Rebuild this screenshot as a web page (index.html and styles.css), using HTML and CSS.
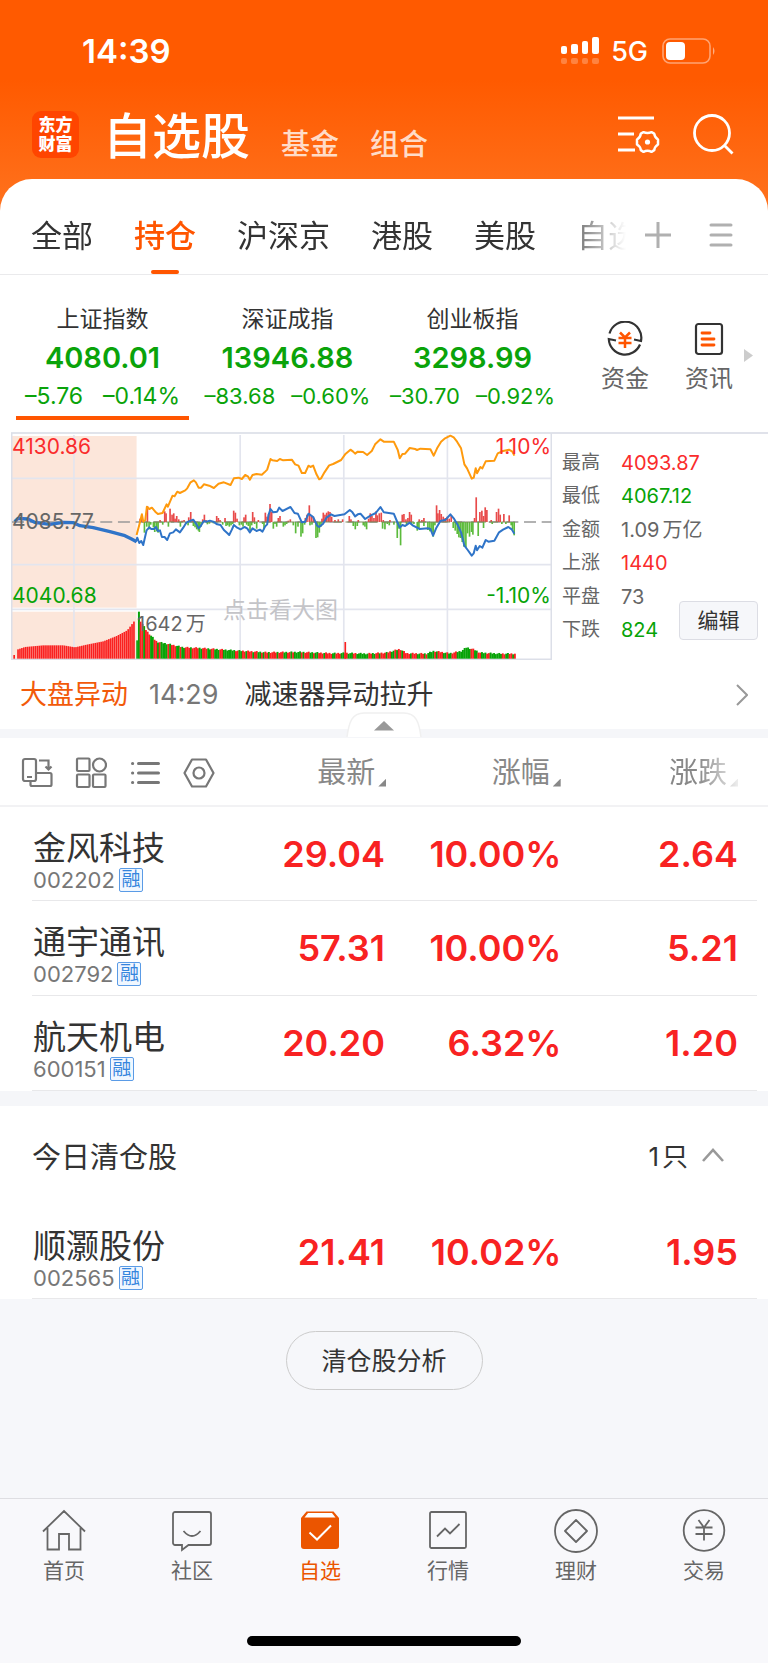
FILE: index.html
```html
<!DOCTYPE html>
<html lang="zh-CN">
<head>
<meta charset="utf-8">
<meta name="viewport" content="width=device-width, initial-scale=1">
<title>自选股</title>
<link rel="stylesheet" href="styles.css">
</head>
<body>
<header class="top">
  <div class="status">
    <span class="clock">14:39</span>
    <div class="status-right">
      <svg class="signal" viewBox="0 0 38 28" fill="#fff">
        <rect x="0" y="9" width="6" height="8" rx="2"/><rect x="10" y="7" width="7" height="10" rx="2"/><rect x="21" y="4" width="6" height="13" rx="2"/><rect x="31" y="0" width="7" height="17" rx="2"/>
        <g opacity=".25"><rect x="0" y="21" width="6" height="6" rx="2"/><rect x="10" y="21" width="7" height="6" rx="2"/><rect x="21" y="21" width="6" height="6" rx="2"/><rect x="31" y="21" width="7" height="6" rx="2"/></g>
      </svg>
      <span class="network">5G</span>
      <svg class="battery" viewBox="0 0 54 26">
        <rect x="1" y="1" width="47" height="24" rx="7" fill="none" stroke="#fff" stroke-opacity=".45" stroke-width="1.6"/>
        <rect x="4" y="4" width="19" height="18" rx="4" fill="#fff"/>
        <path d="M51 9q3 4 0 8z" fill="#fff" fill-opacity=".5"/>
      </svg>
    </div>
  </div>
  <div class="titlebar">
    <div class="logo"><span>东方</span><span>财富</span></div>
    <nav class="sections">
      <h1 class="title">自选股</h1>
      <a class="section" href="#">基金</a>
      <a class="section" href="#">组合</a>
    </nav>
    <button class="icon-btn" aria-label="设置">
      <svg class="settings" viewBox="0 0 42 40" fill="none" stroke="#fff" stroke-width="2.8">
        <path d="M0 3h36M0 19h16M0 35h17"/>
        <path stroke-linejoin="round" stroke-width="2.5" d="M25.5 17.2Q29.500 19 33.500 17.200L36.200 18.600Q36.800 22.500 40 24.500V29.500Q36.800 31.500 36.200 35.200L33.500 36.800Q29.500 34.800 25.500 36.800L22.800 35.200Q22.400 31.500 19 29.500V24.500Q22.400 22.500 22.800 18.600Z"/>
        <circle cx="29.500" cy="27" r="2.600" fill="#fff" stroke="none"/>
      </svg>
    </button>
    <button class="icon-btn" aria-label="搜索">
      <svg class="search" viewBox="0 0 41 41" fill="none" stroke="#fff" stroke-width="2.8"><circle cx="19" cy="19" r="17.500"/><path d="M31 31l8.500 8.500"/></svg>
    </button>
  </div>
</header>

<main class="sheet">
  <div class="groups">
    <nav class="group-tabs">
      <a class="group" href="#">全部</a>
      <a class="group active" href="#">持仓</a>
      <a class="group" href="#">沪深京</a>
      <a class="group" href="#">港股</a>
      <a class="group" href="#">美股</a>
      <a class="group" href="#">自选</a>
    </nav>
    <button class="icon-btn" aria-label="添加"><svg class="plus" viewBox="0 0 26 26" stroke="#b0b0b0" stroke-width="3"><path d="M0 13h26M13 0v26"/></svg></button>
    <button class="icon-btn" aria-label="菜单"><svg class="burger" viewBox="0 0 24 26" stroke="#b0b0b0" stroke-width="3" stroke-linecap="round"><path d="M2 3h20M2 13h20M2 23h20"/></svg></button>
  </div>

  <section class="indices">
    <div class="index-list">
      <a class="index active" href="#"><span class="index-name">上证指数</span><strong class="index-value">4080.01</strong><span class="index-change"><span>–5.76</span><span>–0.14%</span></span></a>
      <a class="index" href="#"><span class="index-name">深证成指</span><strong class="index-value">13946.88</strong><span class="index-change"><span>–83.68</span><span>–0.60%</span></span></a>
      <a class="index" href="#"><span class="index-name">创业板指</span><strong class="index-value">3298.99</strong><span class="index-change"><span>–30.70</span><span>–0.92%</span></span></a>
    </div>
    <div class="shortcuts">
      <a class="shortcut" href="#">
        <svg viewBox="0 0 36 36" fill="none" stroke="#333" stroke-width="2.2"><path d="M2.500 12.500A16.200 16.200 0 0 1 34 20L27 18.500M33 23.500A16.200 16.200 0 0 1 1.800 18L9 19.500"/><g stroke="#ff5500" stroke-width="2.500"><path d="M13 11.500l5 5 5-5M11.500 17h13M11.500 22h13M18 16v11"/></g></svg>
        <span>资金</span>
      </a>
      <a class="shortcut" href="#">
        <svg viewBox="0 0 36 36" fill="none" stroke="#333" stroke-width="2.2"><rect x="5" y="3" width="26" height="30" rx="2.500"/><path stroke="#ff5500" stroke-width="2.800" stroke-linecap="round" d="M11 12h8M11 18h12M11 24h12"/></svg>
        <span>资讯</span>
      </a>
      <svg class="more" viewBox="0 0 9 13"><path d="M0 0l9 6.500L0 13z" fill="#ccc"/></svg>
    </div>
  </section>

  <section class="market">
    <div class="chart">
      <svg class="plot" id="plot" viewBox="33 21 1624 684" preserveAspectRatio="none"></svg>
      <span class="chart-label high">4130.86</span>
      <span class="chart-label base">4085.77</span>
      <span class="chart-label low">4040.68</span>
      <span class="chart-label up">1.10%</span>
      <span class="chart-label down">-1.10%</span>
      <span class="chart-label volume"><span>1642</span><span>万</span></span>
      <span class="chart-label hint">点击看大图</span>
    </div>
    <div class="stats">
      <dl class="stat-list">
        <dt>最高</dt><dd class="red">4093.87</dd>
        <dt>最低</dt><dd class="green">4067.12</dd>
        <dt>金额</dt><dd class="amount"><span>1.09</span><span>万亿</span></dd>
        <dt>上涨</dt><dd class="red">1440</dd>
        <dt>平盘</dt><dd>73</dd>
        <dt>下跌</dt><dd class="green">824</dd>
      </dl>
      <button class="edit">编辑</button>
    </div>
  </section>

  <a class="news" href="#">
    <span class="news-tag">大盘异动</span>
    <time class="news-time">14:29</time>
    <span class="news-text">减速器异动拉升</span>
    <svg class="news-arrow" viewBox="0 0 12 22" fill="none" stroke="#999" stroke-width="2"><path d="M1 1l10 10L1 21"/></svg>
  </a>
  <div class="divider">
    <button class="collapse" aria-label="收起">
      <svg viewBox="0 0 76 26"><path d="M1 25C3 10 6 1 18 1H58C70 1 73 10 75 25" fill="#fff" stroke="#f0f0f0" stroke-width="1.500"/><path d="M28 18.500l10-9.500 10 9.500z" fill="#999"/></svg>
    </button>
  </div>

  <table class="stocks">
    <thead>
      <tr class="head-row">
        <th class="tools">
          <button class="icon-btn" aria-label="切换"><svg viewBox="0 0 32 32" fill="none" stroke="#777" stroke-width="2.2"><rect x="2" y="2" width="13" height="22" rx="2"/><path d="M6 20h5M18 3.500h9.500V12M24.500 9.500l3 3 3-3M15 16h14a1.500 1.500 0 0 1 1.500 1.500v10A1.500 1.500 0 0 1 29 29H11a1.500 1.500 0 0 1-1.500-1.500V24"/></svg></button>
          <button class="icon-btn" aria-label="宫格"><svg viewBox="0 0 32 32" fill="none" stroke="#777" stroke-width="2.2"><rect x="2" y="1.500" width="12.500" height="12.500" rx="1"/><circle cx="24.500" cy="8" r="6.500"/><rect x="2" y="17.500" width="12.500" height="12.500" rx="1"/><rect x="18" y="17.500" width="12.500" height="12.500" rx="1"/></svg></button>
          <button class="icon-btn" aria-label="列表"><svg viewBox="0 0 32 32" fill="none" stroke="#777" stroke-width="3" stroke-linecap="round"><path d="M9.500 6.500h20M9.500 16h20M9.500 25.500h20M3.500 6.500h.2M3.500 16h.2M3.500 25.500h.2"/></svg></button>
          <button class="icon-btn" aria-label="配置"><svg viewBox="0 0 32 32" fill="none" stroke="#777" stroke-width="2.2" stroke-linejoin="round"><path d="M9 2.500h14L30.500 16 23 29.500H9L1.500 16z"/><circle cx="16" cy="16" r="5.500"/></svg></button>
        </th>
        <th><span class="sort">最新</span></th>
        <th><span class="sort">涨幅</span></th>
        <th><span class="sort fade">涨跌</span></th>
      </tr>
    </thead>
    <tbody>
      <tr class="row"><td class="stock"><span class="name">金风科技</span><span class="code">002202<span class="badge">融</span></span></td><td>29.04</td><td>10.00%</td><td>2.64</td></tr>
      <tr class="row"><td class="stock"><span class="name">通宇通讯</span><span class="code">002792<span class="badge">融</span></span></td><td>57.31</td><td>10.00%</td><td>5.21</td></tr>
      <tr class="row"><td class="stock"><span class="name">航天机电</span><span class="code">600151<span class="badge">融</span></span></td><td>20.20</td><td>6.32%</td><td>1.20</td></tr>
    </tbody>
  </table>

  <section class="cleared">
    <div class="cleared-head">
      <h2>今日清仓股</h2>
      <button class="toggle"><span class="count"><span>1</span><span>只</span></span><svg viewBox="0 0 22 14" fill="none" stroke="#999" stroke-width="2.600"><path d="M1 13L11 2l10 11"/></svg></button>
    </div>
    <table class="stocks">
      <tbody>
        <tr class="row"><td class="stock"><span class="name">顺灏股份</span><span class="code">002565<span class="badge">融</span></span></td><td>21.41</td><td>10.02%</td><td>1.95</td></tr>
      </tbody>
    </table>
  </section>

  <div class="foot"><button class="analyse">清仓股分析</button></div>
</main>

<footer class="dock">
  <nav class="dock-tabs">
    <a class="dock-tab" href="#"><svg viewBox="0 0 44 44"><path d="M1 22.500L22 2l21 20.500M5.500 19v21.500h11.500V25h10v15.500h11.500V19"/></svg>首页</a>
    <a class="dock-tab" href="#"><svg viewBox="0 0 44 44"><path d="M5 3h34a2 2 0 0 1 2 2v29a2 2 0 0 1-2 2H18.500L12 41v-5H5a2 2 0 0 1-2-2V5a2 2 0 0 1 2-2zM13.500 22q8.500 10 17 0"/></svg>社区</a>
    <a class="dock-tab active" href="#"><svg viewBox="0 0 44 44"><path d="M8.500 2.500h27L41 9v28a3 3 0 0 1-3 3H6a3 3 0 0 1-3-3V9z" fill="#eb5500" stroke="none"/><path d="M10 4h24l3.500 4.500h-31z" fill="#fff" stroke="none"/><path d="M11.500 23.500l7.500 7 14-14" stroke="#fff" stroke-width="2"/></svg>自选</a>
    <a class="dock-tab" href="#"><svg viewBox="0 0 44 44"><rect x="4" y="3" width="36" height="36" rx="1.500"/><path d="M11 27.500l8-8 5 5 9.500-9.500"/></svg>行情</a>
    <a class="dock-tab" href="#"><svg viewBox="0 0 44 44"><circle cx="22" cy="22" r="21"/><path d="M22 11l11 11-11 11-11-11z" stroke-linejoin="round"/></svg>理财</a>
    <a class="dock-tab" href="#"><svg viewBox="0 0 44 44"><circle cx="22" cy="21.500" r="20.300"/><path d="M16.500 11l5.500 7.500 5.500-7.500M13.500 18.500h17M13.500 25h17M22 18.500v13"/></svg>交易</a>
  </nav>
  <div class="home-bar"></div>
</footer>
<script src="chart.js"></script>
</body>
</html>
```

FILE: styles.css
```css
* { box-sizing: border-box; }

body {
  margin: 0;
  min-height: 100vh;
  display: flex;
  flex-direction: column;
  font-family: Inter, "Noto Sans CJK SC", sans-serif;
  color: #333;
  background: linear-gradient(#ff5a00 80px, #ff7420 220px, #ff7420);
}

a { color: inherit; text-decoration: none; }
button { margin: 0; padding: 0; border: 0; background: none; font: inherit; color: inherit; }
svg { display: block; flex: none; }
h1, h2, dl, dd { margin: 0; }

.red { color: #fa2c2c; }
.green { color: #07a307; }
.icon-btn { display: flex; flex: none; }

/* Status bar and title */
.status { height: 102px; padding: 0 52px 0 82px; display: flex; align-items: center; justify-content: space-between; color: #fff; }
.clock { font-size: 33px; font-weight: 600; }
.status-right { display: flex; align-items: center; }
.signal { width: 38px; height: 28px; }
.network { margin: 0 14px 0 12px; font-size: 27px; font-weight: 500; line-height: 32px; padding-top: 2px; }
.battery { width: 54px; height: 26px; }

.titlebar { height: 77px; padding: 0 34px 12px 32px; display: flex; align-items: center; }
.logo {
  width: 47px; height: 47px; border-radius: 9px; background: #ff4500; color: #fff;
  display: flex; flex-direction: column; align-items: center; justify-content: center;
  font-size: 17px; line-height: 19px; font-weight: 900;
}
.sections { flex: 1; margin-left: 24px; padding-top: 4px; display: flex; align-items: last baseline; gap: 31px; color: #fff; line-height: 56px; }
.title { font-size: 49px; font-weight: 500; }
.section { padding-top: 3px; font-size: 29px; line-height: 40px; font-weight: 500; color: #ffdcc8; }
.sections { align-items: flex-end; }
.settings { width: 42px; height: 40px; margin-right: 33px; }
.search { width: 41px; height: 41px; }

/* Sheet */
.sheet { flex: 1; display: flex; flex-direction: column; background: #fff; border-radius: 32px 32px 0 0; }

.groups { height: 96px; padding-right: 35px; display: flex; align-items: center; border-bottom: 1px solid #eaeaec; }
.group-tabs {
  flex: 1; min-width: 0; height: 96px; padding: 0 0 2px 31px; overflow: hidden;
  display: flex; align-items: stretch; gap: 41px;
  font-size: 31px; line-height: 113px; white-space: nowrap;
  -webkit-mask-image: linear-gradient(to left, transparent, #000 72px);
  mask-image: linear-gradient(to left, transparent, #000 72px);
}
.group { position: relative; flex: none; }
.group.active { color: #ff5500; font-weight: 500; }
.group.active::after { content: ""; position: absolute; left: 50%; bottom: -1px; width: 28px; height: 4px; margin-left: -14px; border-radius: 2px; background: #ff5500; }
.plus { width: 26px; height: 26px; margin: 16px 38px 0 19px; }
.burger { width: 24px; height: 26px; margin-top: 16px; }

/* Indices */
.indices { padding: 28px 15px 12px 16px; display: flex; }
.index-list { flex: 1; display: grid; grid-template-columns: repeat(3, 1fr); gap: 12px; }
.index { display: flex; flex-direction: column; align-items: center; border-bottom: 4px solid transparent; padding-bottom: 2px; white-space: nowrap; color: #0aa30a; }
.index.active { border-color: #ff5500; }
.index-name { font-size: 23px; line-height: 33px; color: #333; }
.index-value { font-size: 29px; line-height: 43px; font-weight: 600; }
.index-change { display: flex; gap: 16px; font-size: 22px; line-height: 35px; }
.active .index-change { gap: 20px; font-size: 23px; }
.shortcuts { margin-left: 42px; display: flex; align-items: flex-start; gap: 36px; }
.shortcut { display: flex; flex-direction: column; align-items: center; padding-top: 18px; font-size: 24px; line-height: 44px; color: #666; }
.shortcut svg { width: 36px; height: 36px; }
.more { width: 9px; height: 13px; margin: 46px 0 0 -25px; }

/* Market chart */
.market { margin-left: 11px; display: flex; }
.chart { position: relative; flex: 1; height: 228px; }
.plot { width: 100%; height: 228px; }
.chart-label { position: absolute; font-size: 21px; line-height: 24px; color: #666; }
.chart-label.high { left: 1px; top: 3px; color: #fa2c2c; }
.chart-label.base { left: 1px; top: 78px; }
.chart-label.low { left: 1px; top: 152px; color: #07a307; }
.chart-label.up { right: 1px; top: 3px; color: #fa2c2c; }
.chart-label.down { right: 1px; top: 152px; color: #07a307; }
.chart-label.volume { left: 126px; top: 180px; display: flex; gap: 3px; font-size: 20px; }
.chart-label.hint { left: 212px; top: 164px; font-size: 23px; line-height: 28px; color: #c4c4c8; }
.stats { position: relative; width: 216px; padding: 12px 0 13px 10px; border-top: 2px solid #e0e2ea; display: flex; }
.stat-list { display: grid; grid-template-columns: 59px auto; grid-template-rows: repeat(6, 1fr); align-items: center; font-size: 19px; line-height: 24px; color: #666; }
.stat-list dd { font-size: 20px; }
.amount { display: flex; gap: 3px; }
.edit { position: absolute; right: 10px; bottom: 20px; width: 79px; height: 39px; border: 1px solid #dcdde4; border-radius: 4px; background: #f6f7fa; font-size: 21px; line-height: 36px; }

/* News */
.news { height: 69px; padding: 0 20px; display: flex; align-items: center; font-size: 27px; line-height: 40px; }
.news-tag { color: #f25a0a; }
.news-time { margin: 0 26px 0 21px; color: #777; }
.news-arrow { width: 12px; height: 22px; margin-left: auto; }
.divider { position: relative; height: 9px; background: #f5f6f9; }
.collapse { position: absolute; left: 50%; bottom: 0; width: 76px; margin-left: -38px; }

/* Stock tables */
.stocks { display: block; }
.stocks thead, .stocks tbody { display: block; }
.head-row, .row { display: grid; grid-template-columns: repeat(4, 1fr); align-items: center; }
.head-row { height: 69px; padding: 2px 30px 0 32px; border-bottom: 2px solid #f2f2f4; font-size: 29px; color: #888; }
.stocks th { padding: 0; font-weight: 400; text-align: right; }
.stocks .tools { display: flex; gap: 22px; margin-left: -11px; }
.tools svg { width: 32px; height: 32px; }
.sort { display: inline-flex; align-items: flex-end; gap: 3px; line-height: 42px; }
.sort::after { content: ""; width: 8px; height: 8px; margin-bottom: 7px; background: #888; clip-path: polygon(100% 0, 100% 100%, 0 100%); }
th:not(:last-child) .sort { margin-right: 3px; }
.sort.fade { -webkit-mask-image: linear-gradient(to left, rgba(0,0,0,.15), #000 40px); mask-image: linear-gradient(to left, rgba(0,0,0,.15), #000 40px); }
.row { min-height: 94px; margin: 0 11px 0 32px; padding-right: 19px; border-bottom: 1px solid #e8e8ea; }
.row + .row { min-height: 95px; }
.row td { padding: 0; text-align: right; font-size: 36px; line-height: 44px; font-weight: 600; color: #f82222; }
.row .stock { display: flex; flex-direction: column; padding: 14px 0 0 1px; text-align: left; font-weight: 400; color: #333; white-space: nowrap; }
.name { font-size: 33px; line-height: 38px; }
.code { display: flex; align-items: center; gap: 4px; font-size: 22px; line-height: 26px; color: #777; }
.badge { width: 24px; height: 24px; border: 1px solid #5a9be6; border-radius: 2px; background: #f0f7ff; font-size: 19px; line-height: 21px; text-align: center; color: #3585dd; }

.cleared { border-top: 15px solid #f5f6f9; }
.cleared-head { height: 99px; padding: 0 44px 2px 32px; display: flex; align-items: center; justify-content: space-between; }
.cleared-head h2 { font-size: 29px; font-weight: 400; }
.toggle { display: flex; align-items: center; gap: 14px; font-size: 26px; }
.count { display: flex; align-items: baseline; gap: 3px; }
.toggle svg { width: 22px; height: 14px; }

.foot { flex: 1; padding: 32px 0; background: #f6f7fa; text-align: center; }
.analyse { min-width: 197px; height: 59px; padding: 0 34px; border: 1px solid #ccc; border-radius: 30px; font-size: 25px; line-height: 54px; }

/* Bottom dock */
.dock { height: 165px; padding-bottom: 17px; display: flex; flex-direction: column; justify-content: space-between; align-items: center; background: #f8f8fb; border-top: 1px solid #dedee2; }
.dock-tabs { width: 100%; padding-top: 10px; display: grid; grid-template-columns: repeat(6, 1fr); }
.dock-tab { display: flex; flex-direction: column; align-items: center; font-size: 21px; line-height: 36px; color: #666; }
.dock-tab svg { width: 44px; height: 44px; fill: none; stroke: #666; stroke-width: 1.8; }
.dock-tab.active { color: #eb5500; }
.home-bar { width: 274px; height: 10px; border-radius: 5px; background: #000; }
```

FILE: chart.js
```js
const NS = "http://www.w3.org/2000/svg";
const plot = document.getElementById("plot");

function add(tag, attrs) {
  const el = document.createElementNS(NS, tag);
  for (const key in attrs) el.setAttribute(key, attrs[key]);
  plot.appendChild(el);
}
function line(points, color, width) {
  add("polyline", { points: points, fill: "none", stroke: color, "stroke-width": width, "stroke-linejoin": "round" });
}

// Pre-market shading
add("rect", { x: 36, y: 33, width: 374, height: 515, fill: "#fce6da" });
add("rect", { x: 36, y: 560, width: 374, height: 142, fill: "#fce6da" });

// Grid
const grid = "#e3e5ee";
[160, 419, 553].forEach(y => add("path", { d: `M33 ${y}H1657`, stroke: grid, "stroke-width": 5 }));
[222, 721, 1032, 1343].forEach(x => add("path", { d: `M${x} 30V702`, stroke: grid, "stroke-width": 5 }));
add("rect", { x: 35, y: 24, width: 1620, height: 679, fill: "none", stroke: "#dcdfe8", "stroke-width": 5 });
add("path", { d: "M36 291H1655", stroke: "#999", "stroke-width": 5, "stroke-dasharray": "36 17" });

// Momentum bars: x, height (positive is up)
const momentum = [
  420,10,425,20,433,-32,442,48,440,-14,447,-22,452,-8,460,-16,464,-30,470,-28,474,-32,480,6,488,-8,494,32,498,26,505,-14,510,40,516,22,521,26,525,10,530,18,536,8,541,-14,546,4,552,6,558,-6,564,-10,566,14,572,30,578,8,580,-12,585,-16,590,-22,595,-26,598,-30,603,-14,608,8,613,22,618,6,622,-7,628,-5,640,-4,650,18,655,12,660,6,668,-8,675,12,678,-12,683,-10,688,-14,693,-10,698,-6,701,34,706,28,711,10,718,-10,724,-8,729,-14,732,14,737,22,740,-8,745,-12,750,-24,755,-10,758,30,763,14,764,-6,770,-20,775,6,788,-6,792,-22,796,28,801,16,806,24,810,54,815,30,
  820,-20,825,-6,830,-14,835,12,840,18,850,-14,855,-10,860,-6,865,4,871,8,880,-10,887,-34,894,-14,903,-44,908,-34,914,-8,916,12,921,22,928,50,934,20,940,16,930,-10,936,-8,948,-48,953,-46,958,-32,963,-14,966,10,970,28,975,22,980,28,985,32,990,30,995,16,1005,6,1015,8,1028,8,1048,18,1053,8,1060,-12,1066,-22,1072,-12,1075,6,1090,-10,1095,-14,1100,-22,1106,10,1111,26,1116,18,1122,12,1128,32,1132,20,1138,26,1144,28,1150,6,1148,-20,1155,-22,1162,-6,1168,-10,1170,6,1182,-8,1192,-48,1197,-20,1202,-70,1207,22,1212,24,1218,8,1224,12,1229,30,1234,22,1220,-10,1235,-8,1242,-6,1252,-26,1257,-20,1258,8,1266,6,1272,12,1272,-12,1284,-24,1290,-28,1296,-30,1300,-44,1305,-10,1310,50,1314,26,1319,36,1324,24,1330,16,1336,12,1342,16,1348,10,1354,20,1360,-18,1366,-26,1372,-36,1377,-46,1382,-48,1387,-60,1392,-74,1398,-76,1403,-34,1409,-44,1415,-30,1419,-38,1424,12,1429,74,1435,-42,1440,30,1446,34,1451,18,1451,-18,1456,44,1461,36,1474,6,1477,-6,1490,30,1496,40,1501,22,1506,-6,1512,24,1518,-6,1528,20,1534,-10,1538,-22,1543,-40
];
for (let i = 0; i < momentum.length; i += 2) {
  const h = momentum[i + 1];
  add("rect", { x: momentum[i] - 2, y: h > 0 ? 291 - h : 291, width: 5, height: Math.abs(h), fill: h > 0 ? "#e84a4a" : "#5cbb3c" });
}
add("path", { d: "M425 291H1545", stroke: "#7d8a5a", "stroke-width": 3, "stroke-dasharray": "26 10" });

// Volume
function profile(keys, x) {
  for (let i = 0; i + 3 < keys.length; i += 2) {
    if (x <= keys[i + 2]) {
      const t = (x - keys[i]) / (keys[i + 2] - keys[i]);
      return keys[i + 1] + t * (keys[i + 3] - keys[i + 1]);
    }
  }
  return keys[keys.length - 1];
}
const early = [54, 28, 75, 35, 130, 40, 190, 40, 225, 34, 260, 42, 310, 52, 350, 68, 382, 85, 404, 114];
add("rect", { x: 40, y: 690, width: 5, height: 11, fill: "#fa2020" });
for (let x = 54; x <= 404; x += 5.8) {
  const h = profile(early, x);
  add("rect", { x: x - 2.4, y: 701 - h, width: 5, height: h, fill: "#fa2020" });
}
const late = [422, 112, 440, 82, 470, 50, 510, 42, 550, 33, 600, 31, 700, 24, 800, 18, 900, 19, 1000, 15, 1035, 16, 1100, 14, 1160, 17, 1200, 28, 1220, 15, 1280, 14, 1302, 22, 1350, 15, 1385, 22, 1400, 33, 1424, 26, 1440, 17, 1500, 14, 1550, 14];
const colors = "rrgrrrggrrgrggggrgrrrggrggrrrgrrrrggrrrggrrgggrrgggggggrrggrrgrrrgrrggrgrrgrr";
add("rect", { x: 409, y: 646, width: 5, height: 55, fill: "#07a307" });
add("rect", { x: 414, y: 560, width: 6, height: 141, fill: "#07a307" });
for (let x = 422, i = 0; x <= 1546; x += 5.2, i++) {
  const h = profile(late, x) + (i * 7 % 5) - 1;
  const red = colors[i % colors.length] === "r" && !(x > 1375 && x < 1415);
  add("rect", { x: x - 2.6, y: 701 - h, width: 5.8, height: h, fill: red ? "#fa2020" : "#07a307" });
}
add("rect", { x: 1034, y: 651, width: 5, height: 50, fill: "#fa2020" });

// Leading index and price
line("410,330 418,300 426,268 430,290 436,285 441,245 448,252 456,248 466,260 474,267 488,264 500,238 504,245 518,212 524,214 532,200 540,204 556,196 562,190 572,172 582,166 588,172 596,188 604,188 612,178 628,182 642,189 656,176 672,172 692,180 702,160 716,158 726,162 736,150 744,154 750,164 758,150 770,147 786,149 794,142 802,134 812,102 818,106 832,108 840,102 850,106 876,104 886,118 896,122 906,144 916,144 926,122 932,126 940,122 950,148 958,163 964,160 974,142 988,121 1000,117 1024,105 1036,88 1052,74 1060,80 1066,86 1074,80 1090,81 1102,90 1116,78 1126,58 1142,43 1152,50 1182,50 1194,75 1200,100 1208,87 1216,86 1230,69 1246,72 1252,75 1262,71 1292,73 1302,92 1312,70 1324,50 1336,40 1352,32 1362,37 1372,50 1384,70 1394,118 1402,130 1416,161 1422,158 1428,130 1432,145 1442,126 1448,130 1458,109 1484,107 1494,85 1510,78 1528,74 1538,80 1544,92", "#ff9a0d", 6);
line("44,290 54,280 84,282 104,292 150,298 190,292 220,293 240,302 280,308 330,320 375,332 395,342 410,350", "#2f74c8", 10);
line("408,350 412,338 418,354 424,348 430,360 440,316 448,307 454,312 462,312 468,306 474,318 480,316 486,336 494,336 502,345 510,325 520,322 528,313 540,322 550,308 560,292 570,288 580,284 590,298 596,310 602,304 612,288 620,290 630,287 640,290 652,298 662,300 672,315 682,324 688,330 696,314 702,300 712,308 722,313 734,306 742,310 750,322 758,310 770,318 780,314 788,320 796,304 802,298 806,270 812,252 820,262 832,260 838,248 848,258 872,246 884,264 894,266 906,292 916,290 926,266 940,276 952,302 958,306 970,296 980,278 994,268 1004,273 1034,268 1050,255 1058,262 1066,274 1074,268 1082,266 1096,282 1112,272 1128,264 1142,246 1152,262 1182,266 1190,285 1200,308 1208,300 1216,303 1230,293 1240,302 1260,312 1284,310 1292,312 1300,332 1310,308 1322,288 1338,284 1352,268 1362,280 1374,300 1384,322 1394,362 1404,375 1416,392 1422,385 1428,362 1432,376 1440,363 1448,368 1458,345 1466,350 1484,347 1498,322 1510,314 1526,306 1536,313 1544,326", "#2f74c8", 6);
```
